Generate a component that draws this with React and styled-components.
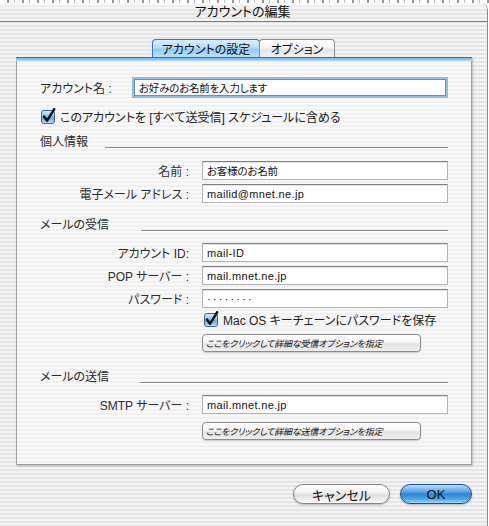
import styled, { createGlobalStyle } from "styled-components";

const GlobalStyle = createGlobalStyle`
  html, body {
    margin: 0;
    padding: 0;
    background: #ffffff;
  }
  body {
    font-family: "Liberation Sans", "Noto Sans CJK JP", sans-serif;
    font-feature-settings: "palt";
    color: #2a2a2a;
  }
`;

const stripes = `repeating-linear-gradient(180deg, #f4f4f4 0px, #f4f4f4 2px, #e5e5e5 2px, #e5e5e5 4px)`;

const Screen = styled.div`
  width: 489px;
  height: 526px;
  overflow: hidden;
  background: #ffffff;
`;

const Backdrop = styled.div`
  height: 3px;
  background: repeating-linear-gradient(90deg, #ffffff 0px, #ffffff 7px, #6b6b6b 7px, #6b6b6b 9px, #ffffff 9px, #ffffff 14px, #9aa7c0 14px, #9aa7c0 15px);
  opacity: 0.7;
`;

const Window = styled.div`
  width: 487px;
  height: 523px;
  background: ${stripes};
  border-right: 1px solid #8c8c8c;
  border-radius: 2px 7px 0 0;
  display: flex;
  flex-direction: column;
`;

const TitleBar = styled.div`
  height: 19px;
  border-bottom: 1px solid #7a7a7a;
  border-radius: 2px 7px 0 0;
  background: linear-gradient(180deg, rgba(255, 255, 255, 0.7), rgba(255, 255, 255, 0) 6px), ${stripes};
  display: flex;
  align-items: center;
  justify-content: center;
  font-size: 13px;
  line-height: 15px;
  color: #111;
  padding-right: 2px;
  padding-bottom: 2px;
  box-sizing: border-box;
`;

const Body = styled.div`
  flex: 1;
  display: flex;
  flex-direction: column;
  padding-top: 17px;
`;

const TabBar = styled.div`
  display: flex;
  justify-content: center;
  height: 18px;
`;

const Tab = styled.div`
  width: ${(p) => p.$w}px;
  height: 18px;
  box-sizing: border-box;
  display: flex;
  align-items: center;
  justify-content: center;
  font-size: 12px;
  color: #111;
  border: 1px solid ${(p) => (p.$active ? "#3f77b3" : "#8e8e8e")};
  border-bottom: none;
  border-radius: 4px 4px 0 0;
  background: ${(p) =>
    p.$active
      ? "linear-gradient(180deg, #dbeffd 0%, #b5dcf7 45%, #93cbf1 55%, #b9e2fb 100%)"
      : "linear-gradient(180deg, #ffffff 0%, #f6f6f6 45%, #e4e4e4 55%, #f1f1f1 100%)"};
  margin-left: ${(p) => (p.$active ? 0 : -1)}px;
`;

const Pane = styled.div`
  margin: 0 15px 0 16px;
  height: 408px;
  box-sizing: border-box;
  border: 1px solid #9d9d9d;
  border-top: none;
  background: rgba(255, 255, 255, 0.42);
  box-shadow: 1px 1px 2px rgba(0, 0, 0, 0.22);
  display: flex;
  flex-direction: column;
`;

const PaneTopBar = styled.div`
  height: 3px;
  margin: 0 -1px;
  border-top: 1px solid #2c78c6;
  background: linear-gradient(180deg, #71b3e6, #b5dcf8);
`;

const Content = styled.div`
  padding: 16px 23px 0 23px;
  display: flex;
  flex-direction: column;
`;

const AccountRow = styled.div`
  display: flex;
  align-items: center;
  height: 21px;
`;

const RowLabel = styled.div`
  width: ${(p) => p.$w}px;
  font-size: 12px;
  color: #2a2a2a;
  white-space: nowrap;
`;

const FocusInput = styled.div`
  flex: 1;
  height: 17px;
  margin: 0 2px;
  box-sizing: border-box;
  background: #ffffff;
  border: 1px solid #6e8fae;
  box-shadow: 0 0 0 2px #8fbde4;
  display: flex;
  align-items: center;
  padding-left: 4px;
  font-size: 10.5px;
  letter-spacing: -0.2px;
  color: #111;
`;

const CheckRow = styled.div`
  display: flex;
  align-items: center;
  gap: 4px;
  height: 16px;
  margin-top: ${(p) => p.$mt}px;
  margin-left: ${(p) => p.$ml || 0}px;
  font-size: 12px;
  color: #222;
  white-space: nowrap;
`;

const SectionHeader = styled.div`
  display: flex;
  height: 16px;
  margin-top: ${(p) => p.$mt}px;
`;

const SectionTitle = styled.div`
  width: ${(p) => p.$w}px;
  font-size: 12px;
  line-height: 16px;
  color: #2a2a2a;
  white-space: nowrap;
`;

const SectionRule = styled.div`
  flex: 1;
  align-self: flex-end;
  height: 1px;
  margin-bottom: 2px;
  background: #8a8a8a;
  box-shadow: 0 1px 0 rgba(255, 255, 255, 0.8);
`;

const FieldGrid = styled.div`
  display: grid;
  grid-template-columns: 150px 1fr;
  column-gap: 12px;
  row-gap: 4px;
  grid-auto-rows: 19px;
  margin-top: ${(p) => p.$mt}px;
`;

const FieldLabel = styled.div`
  display: flex;
  align-items: center;
  justify-content: flex-end;
  font-size: 12px;
  color: #2e2e2e;
  white-space: nowrap;
  padding-right: 1px;
`;

const TextField = styled.div`
  box-sizing: border-box;
  height: 19px;
  background: #ffffff;
  border: 1px solid #b3b3b3;
  border-top-color: #7f7f7f;
  box-shadow: inset 0 1px 1px rgba(0, 0, 0, 0.12);
  display: flex;
  align-items: center;
  padding-left: 4px;
  font-size: ${(p) => (p.$jp ? 10.5 : 11)}px;
  letter-spacing: ${(p) => (p.$dots ? 2.2 : p.$jp ? -0.2 : 0.35)}px;
  color: #111;
  white-space: nowrap;
`;

const Indent = styled.div`
  padding-left: 162px;
  display: flex;
  flex-direction: column;
`;

const OptionButton = styled.div`
  width: 219px;
  height: 18px;
  box-sizing: border-box;
  margin-top: ${(p) => p.$mt}px;
  border: 1px solid #8b8b8b;
  border-radius: 4px;
  background: linear-gradient(180deg, #ffffff 0%, #f7f7f7 45%, #e2e2e2 55%, #efefef 100%);
  box-shadow: 0 1px 1px rgba(0, 0, 0, 0.18);
  display: flex;
  align-items: center;
  padding-left: 3px;
  font-size: 9px;
  font-style: italic;
  letter-spacing: -0.2px;
  color: #111;
  white-space: nowrap;
`;

const ButtonRow = styled.div`
  display: flex;
  justify-content: flex-end;
  gap: 10px;
  margin-top: 19px;
  padding-right: 15px;
`;

const PillButton = styled.div`
  width: ${(p) => p.$w}px;
  height: 20px;
  box-sizing: border-box;
  border-radius: 10px;
  border: 1px solid ${(p) => (p.$primary ? "#1f4f8a" : "#868686")};
  background: ${(p) =>
    p.$primary
      ? "linear-gradient(180deg, #b9dcf8 0%, #6fb0ea 30%, #2f86d6 52%, #4ea6ea 78%, #9fd8fc 100%)"
      : "linear-gradient(180deg, #ffffff 0%, #f4f4f4 40%, #dedede 55%, #eeeeee 80%, #fbfbfb 100%)"};
  box-shadow: 0 1px 2px rgba(0, 0, 0, 0.25);
  display: flex;
  align-items: center;
  justify-content: center;
  font-size: 13px;
  color: #111;
`;

const CheckBox = ({ id }) => (
  <svg width="15" height="16" viewBox="0 0 15 16">
    <defs>
      <linearGradient id={id} x1="0" y1="0" x2="0" y2="1">
        <stop offset="0" stopColor="#d6eefd" />
        <stop offset="0.45" stopColor="#8ac4ef" />
        <stop offset="0.55" stopColor="#5aa6e3" />
        <stop offset="1" stopColor="#bfe6fd" />
      </linearGradient>
    </defs>
    <rect x="0.5" y="2.5" width="13" height="13" rx="2.5" fill={`url(#${id})`} stroke="#3b6797" />
    <path
      d="M3 8.5 L6 12.8 L13.2 1.2"
      fill="none"
      stroke="#0d0d0d"
      strokeWidth="2.4"
      strokeLinecap="round"
      strokeLinejoin="round"
    />
  </svg>
);

export default function App() {
  return (
    <Screen>
      <GlobalStyle />
      <Backdrop />
      <Window>
        <TitleBar>アカウントの編集</TitleBar>
        <Body>
          <TabBar>
            <Tab $active $w={108}>アカウントの設定</Tab>
            <Tab $w={76}>オプション</Tab>
          </TabBar>
          <Pane>
            <PaneTopBar />
            <Content>
              <AccountRow>
                <RowLabel $w={92}>アカウント名 :</RowLabel>
                <FocusInput>お好みのお名前を入力します</FocusInput>
              </AccountRow>

              <CheckRow $mt={10} $ml={1}>
                <CheckBox id="cb1" />
                このアカウントを [すべて送受信] スケジュールに含める
              </CheckRow>

              <SectionHeader $mt={10}>
                <SectionTitle $w={65}>個人情報</SectionTitle>
                <SectionRule />
              </SectionHeader>
              <FieldGrid $mt={11}>
                <FieldLabel>名前 :</FieldLabel>
                <TextField $jp>お客様のお名前</TextField>
                <FieldLabel>電子メール アドレス :</FieldLabel>
                <TextField>mailid@mnet.ne.jp</TextField>
              </FieldGrid>

              <SectionHeader $mt={14}>
                <SectionTitle $w={101}>メールの受信</SectionTitle>
                <SectionRule />
              </SectionHeader>
              <FieldGrid $mt={10}>
                <FieldLabel>アカウント ID:</FieldLabel>
                <TextField>mail-ID</TextField>
                <FieldLabel>POP サーバー :</FieldLabel>
                <TextField>mail.mnet.ne.jp</TextField>
                <FieldLabel>パスワード :</FieldLabel>
                <TextField $dots>········</TextField>
              </FieldGrid>
              <Indent>
                <CheckRow $mt={3} $ml={2}>
                  <CheckBox id="cb2" />
                  Mac OS キーチェーンにパスワードを保存
                </CheckRow>
                <OptionButton $mt={7}>ここをクリックして詳細な受信オプションを指定</OptionButton>
              </Indent>

              <SectionHeader $mt={17}>
                <SectionTitle $w={100}>メールの送信</SectionTitle>
                <SectionRule />
              </SectionHeader>
              <FieldGrid $mt={10}>
                <FieldLabel>SMTP サーバー :</FieldLabel>
                <TextField>mail.mnet.ne.jp</TextField>
              </FieldGrid>
              <Indent>
                <OptionButton $mt={8}>ここをクリックして詳細な送信オプションを指定</OptionButton>
              </Indent>
            </Content>
          </Pane>
          <ButtonRow>
            <PillButton $w={97}>キャンセル</PillButton>
            <PillButton $primary $w={72}>OK</PillButton>
          </ButtonRow>
        </Body>
      </Window>
    </Screen>
  );
}
